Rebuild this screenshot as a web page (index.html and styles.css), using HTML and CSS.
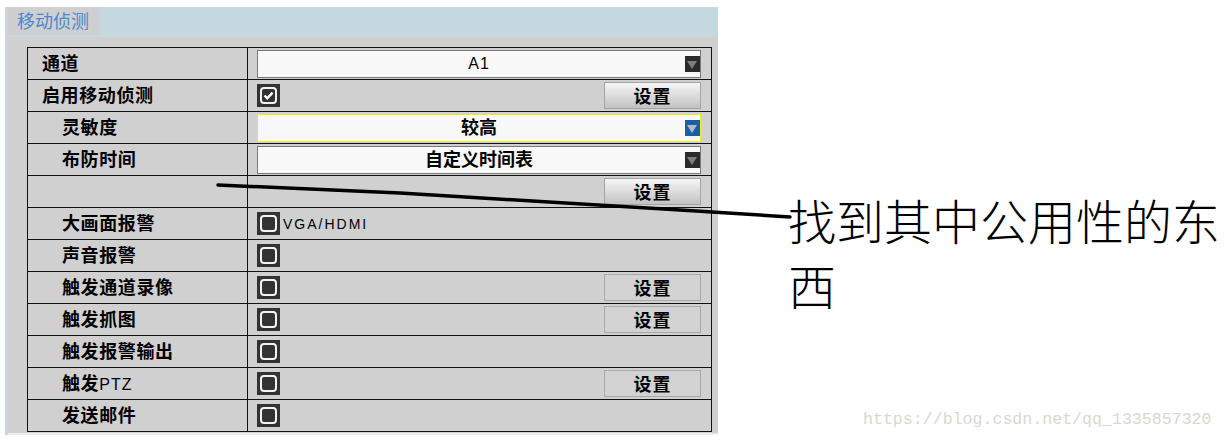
FILE: index.html
```html
<!DOCTYPE html>
<html lang="zh-CN">
<head>
  <meta charset="UTF-8">
  <title>移动侦测</title>
  <link rel="stylesheet" href="styles.css">
</head>
<body>
  <div class="page">
    <div class="panel">
      <div class="panel-head">
        <div class="tab">移动侦测</div>
      </div>

      <div class="panel-body">
        <div class="table">
          <div class="row">
            <div class="label">通道</div>
            <div class="field">
              <div class="select"><span class="latin">A1</span><span class="arrow"></span></div>
            </div>
          </div>

          <div class="row">
            <div class="label">启用移动侦测</div>
            <div class="field">
              <svg class="check" viewBox="0 0 23 23"><rect width="23" height="23" fill="#333"/><rect x="4" y="4" width="15" height="15" rx="3" fill="none" stroke="#f2f2f2" stroke-width="2"/><path d="M7.5 11.5 L10.3 14.3 L15.6 8.6" fill="none" stroke="#fff" stroke-width="2.4"/></svg>
              <div class="btn">设置</div>
            </div>
          </div>

          <div class="row">
            <div class="label sub">灵敏度</div>
            <div class="field">
              <div class="select active">较高<span class="arrow"></span></div>
            </div>
          </div>

          <div class="row">
            <div class="label sub">布防时间</div>
            <div class="field">
              <div class="select">自定义时间表<span class="arrow"></span></div>
            </div>
          </div>

          <div class="row">
            <div class="label sub"></div>
            <div class="field">
              <div class="btn">设置</div>
            </div>
          </div>

          <div class="row">
            <div class="label sub">大画面报警</div>
            <div class="field">
              <svg class="check" viewBox="0 0 23 23"><rect width="23" height="23" fill="#333"/><rect x="4" y="4" width="15" height="15" rx="3" fill="none" stroke="#f2f2f2" stroke-width="2"/></svg>
              <span class="field-text">VGA/HDMI</span>
            </div>
          </div>

          <div class="row">
            <div class="label sub">声音报警</div>
            <div class="field">
              <svg class="check" viewBox="0 0 23 23"><rect width="23" height="23" fill="#333"/><rect x="4" y="4" width="15" height="15" rx="3" fill="none" stroke="#f2f2f2" stroke-width="2"/></svg>
            </div>
          </div>

          <div class="row">
            <div class="label sub">触发通道录像</div>
            <div class="field">
              <svg class="check" viewBox="0 0 23 23"><rect width="23" height="23" fill="#333"/><rect x="4" y="4" width="15" height="15" rx="3" fill="none" stroke="#f2f2f2" stroke-width="2"/></svg>
              <div class="btn flat">设置</div>
            </div>
          </div>

          <div class="row">
            <div class="label sub">触发抓图</div>
            <div class="field">
              <svg class="check" viewBox="0 0 23 23"><rect width="23" height="23" fill="#333"/><rect x="4" y="4" width="15" height="15" rx="3" fill="none" stroke="#f2f2f2" stroke-width="2"/></svg>
              <div class="btn flat">设置</div>
            </div>
          </div>

          <div class="row">
            <div class="label sub">触发报警输出</div>
            <div class="field">
              <svg class="check" viewBox="0 0 23 23"><rect width="23" height="23" fill="#333"/><rect x="4" y="4" width="15" height="15" rx="3" fill="none" stroke="#f2f2f2" stroke-width="2"/></svg>
            </div>
          </div>

          <div class="row">
            <div class="label sub">触发<span class="latin">PTZ</span></div>
            <div class="field">
              <svg class="check" viewBox="0 0 23 23"><rect width="23" height="23" fill="#333"/><rect x="4" y="4" width="15" height="15" rx="3" fill="none" stroke="#f2f2f2" stroke-width="2"/></svg>
              <div class="btn flat">设置</div>
            </div>
          </div>

          <div class="row">
            <div class="label sub">发送邮件</div>
            <div class="field">
              <svg class="check" viewBox="0 0 23 23"><rect width="23" height="23" fill="#333"/><rect x="4" y="4" width="15" height="15" rx="3" fill="none" stroke="#f2f2f2" stroke-width="2"/></svg>
            </div>
          </div>
        </div>
      </div>
    </div>

    <div class="note">找到其中公用性的东<br>西</div>
  </div>

  <!-- hand-drawn pointer over the screenshot -->
  <svg class="scribble" viewBox="0 0 1224 443">
    <path d="M218 185 L400 193 L680 210 L790 217" fill="none" stroke="#000" stroke-width="3.5" stroke-linecap="round" stroke-linejoin="round"/>
  </svg>

  <div class="watermark">https://blog.csdn.net/qq_1335857320</div>
</body>
</html>
```

FILE: styles.css
```css
body {
  margin: 0;
  background-color: #fff;
  font-family: "Noto Sans CJK SC", sans-serif;
  color: #000;
}

.page {
  display: flex;
  align-items: flex-start;
}

.panel {
  margin: 7px 0 0 5px;
  width: 713px;
  box-sizing: border-box;
  border-left: 3px solid #c5d7df;
}

.panel-head {
  height: 30px;
  background-color: #c5d7df;
}

.tab {
  width: 92px;
  height: 28px;
  box-sizing: border-box;
  padding-left: 9px;
  background-color: #cfcfcf;
  color: #4a88d4;
  font-size: 18px;
  line-height: 26px;
}

.panel-body {
  background-color: #d0d0d0;
  padding: 10px 6px 1px 19px;
  border-bottom: 2px solid #ececec;
}

.table {
  border: 1px solid #111;
  border-bottom: none;
}

.row {
  display: grid;
  grid-template-columns: 220px 1fr;
  height: 31px;
  border-bottom: 1px solid #111;
}

.label {
  border-right: 1px solid #111;
  padding-left: 14px;
  font-size: 18px;
  font-weight: 700;
  line-height: 28px;
  letter-spacing: 0.6px;
  white-space: nowrap;
}

.label.sub {
  padding-left: 34px;
}

.latin {
  font-family: "Liberation Sans", sans-serif;
  font-size: 16px;
  font-weight: 400;
  letter-spacing: 1px;
}

.field {
  display: flex;
  align-items: center;
  padding: 0 10px 0 9px;
}

.select {
  flex: 1;
  position: relative;
  height: 28px;
  box-sizing: border-box;
  padding-bottom: 3px;
  border: 1px solid #7a7a7a;
  background-color: #f8f8f8;
  display: flex;
  align-items: center;
  justify-content: center;
  font-size: 18px;
  font-weight: 700;
}

.select .latin {
  margin-top: 3px;
}

.select.active {
  border-color: #f0ec18;
}

.arrow {
  position: absolute;
  right: 0;
  top: 5px;
  width: 15px;
  height: 16px;
  background-color: #2a2a2a;
}

.arrow::after {
  content: "";
  position: absolute;
  left: 2px;
  top: 5px;
  border-left: 5.5px solid transparent;
  border-right: 5.5px solid transparent;
  border-top: 8px solid #7c7c7c;
}

.select.active .arrow {
  background-color: #1c5ca8;
}

.select.active .arrow::after {
  border-top-color: #b6bcc6;
}

.check {
  width: 23px;
  height: 23px;
  flex-shrink: 0;
}

.field-text {
  margin-left: 3px;
  font-family: "Liberation Sans", sans-serif;
  font-size: 14px;
  letter-spacing: 2px;
}

.btn {
  margin-left: auto;
  width: 97px;
  height: 27px;
  box-sizing: border-box;
  padding-bottom: 2px;
  border: 1px solid #a4a4a4;
  background: linear-gradient(#f6f6f6, #c2c2c2);
  display: flex;
  align-items: center;
  justify-content: center;
  font-size: 18px;
  font-weight: 700;
  letter-spacing: 1px;
}

.btn.flat {
  background: #d2d2d2;
  border-color: #a8a8a8;
}

.note {
  margin: 187px 0 0 70px;
  font-size: 48px;
  font-weight: 300;
  line-height: 65px;
  white-space: nowrap;
}

.scribble {
  position: absolute;
  left: 0;
  top: 0;
  width: 1224px;
  height: 443px;
  pointer-events: none;
}

.watermark {
  position: absolute;
  left: 863px;
  top: 410px;
  font-family: "Liberation Mono", monospace;
  font-size: 16.6px;
  color: #d8d8d0;
}
```
